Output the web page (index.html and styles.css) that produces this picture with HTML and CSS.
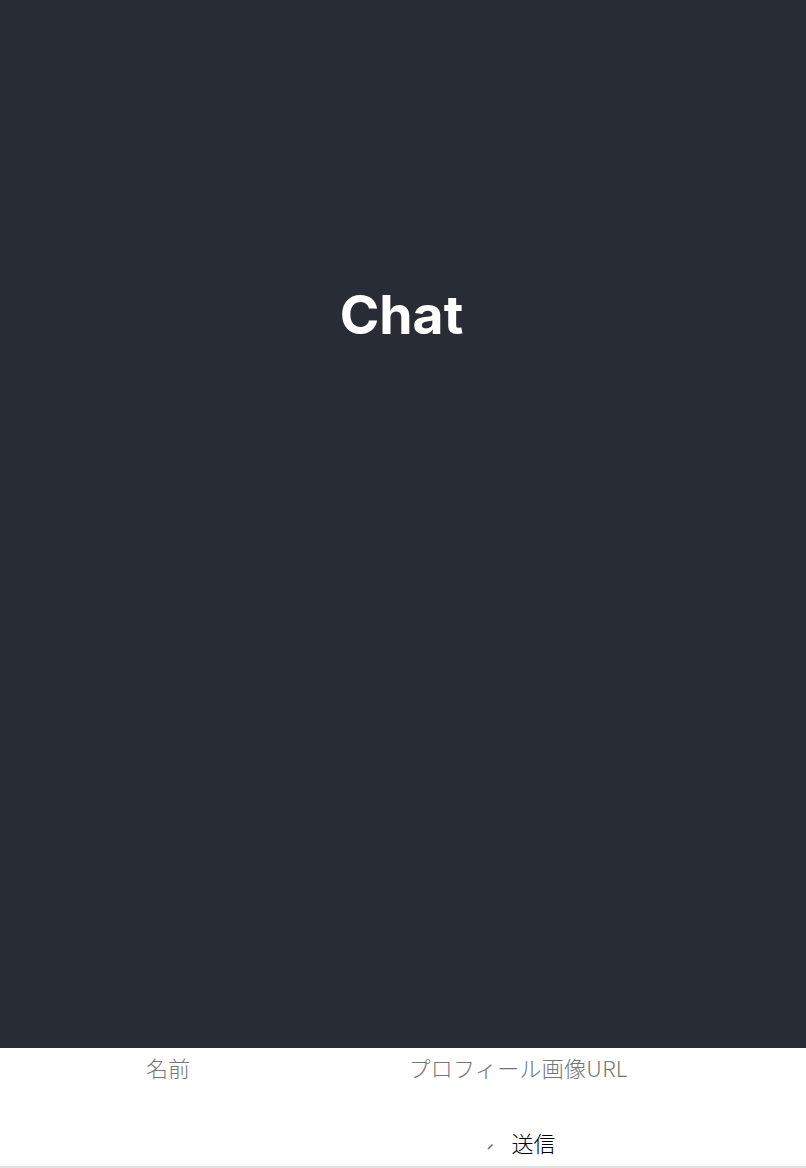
FILE: index.html
```html
<!DOCTYPE html>
<html lang="ja">

<head>
    <meta charset="UTF-8">
    <title>Chat</title>
    <link rel="stylesheet" href="styles.css">
</head>

<body>
    <div class="main">
        <h1 class="title">Chat</h1>
    </div>
    <form class="form">
        <div class="names">
            <input class="name" type="text" placeholder="名前">
            <input class="image" type="text" placeholder="プロフィール画像URL">
        </div>
        <div class="send">
            <div class="messagebox">
                <textarea class="message"></textarea>
                <svg class="grip" width="7" height="7" viewBox="0 0 7 7">
                    <path d="M1 6 L5.5 1.5" stroke="#707070" stroke-width="1.6" fill="none" />
                </svg>
            </div>
            <button class="btn" type="button">送信</button>
        </div>
    </form>
</body>

</html>
```

FILE: styles.css
```css
* {
    margin: 0px;
    padding: 0px;
    box-sizing: border-box;
}

body {
    background-color: white;
    font-family: "Liberation Sans", "Noto Sans CJK JP", sans-serif;
}

.main {
    height: 1048px;
    padding-top: 282px;
    padding-right: 3px;
    background-color: #282c34;
}

.title {
    color: white;
    font-family: Inter, sans-serif;
    font-size: 53.5px;
    font-weight: 700;
    line-height: 66px;
    text-align: center;
}

.form {
    height: 120px;
    border-bottom: 2px solid #e2e2e2;
}

.names {
    display: flex;
    height: 44px;
}

.name,
.image {
    height: 38px;
    border: none;
    outline: none;
    font-family: "Noto Sans CJK JP", sans-serif;
    font-size: 22px;
    font-weight: 300;
    text-align: center;
}

.name {
    width: 336px;
}

.image {
    width: 364px;
    letter-spacing: 0.3px;
}

.name::placeholder,
.image::placeholder {
    color: #757575;
}

.send {
    display: flex;
    align-items: flex-start;
    height: 74px;
    padding-left: 200px;
}

.messagebox {
    position: relative;
    width: 294px;
    height: 58px;
}

.message {
    display: block;
    width: 100%;
    height: 100%;
    border: none;
    outline: none;
    resize: none;
}

.grip {
    position: absolute;
    right: 0px;
    bottom: 0px;
}

.btn {
    width: 79px;
    height: 32px;
    margin-top: 34px;
    border: none;
    background-color: transparent;
    color: black;
    font-family: "Noto Sans CJK JP", sans-serif;
    font-size: 22px;
    font-weight: 300;
    line-height: 32px;
    cursor: pointer;
}
```
